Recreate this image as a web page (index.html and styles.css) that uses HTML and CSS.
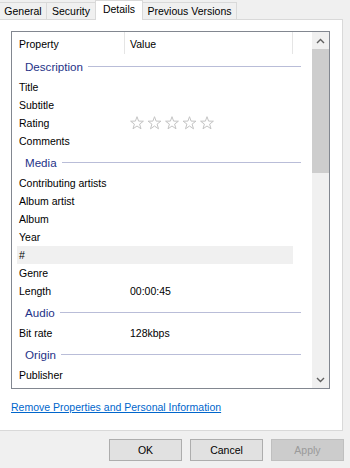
FILE: index.html
```html
<!DOCTYPE html>
<html lang="en">
  <head>
    <meta charset="utf-8">
    <title>Properties - Details</title>
    <link rel="stylesheet" href="styles.css">
  </head>
  <body>
    <div class="tabs">
      <div class="tab tab-general">General</div>
      <div class="tab tab-security">Security</div>
      <div class="tab tab-details active">Details</div>
      <div class="tab tab-previous">Previous Versions</div>
    </div>

    <div class="panel">
      <div class="list">
        <div class="list-body">
          <div class="list-head">
            <div class="head-col col-name">Property</div>
            <div class="head-col col-value">Value</div>
          </div>

          <div class="group"><span class="group-label">Description</span><span class="group-line"></span></div>
          <div class="row"><span class="name">Title</span><span class="value"></span></div>
          <div class="row"><span class="name">Subtitle</span><span class="value"></span></div>
          <div class="row">
            <span class="name">Rating</span>
            <span class="value stars">
              <svg width="90" height="14" viewBox="0 0 90 14">
                <g fill="none" stroke="#c4c4c4" stroke-width="1" stroke-linejoin="round">
                  <polygon id="star" points="7,0.7 8.6,5.1 13.4,5.2 9.6,8.1 11,12.8 7,10 3,12.8 4.4,8.1 0.6,5.2 5.4,5.1"/>
                  <use href="#star" x="17.5"/>
                  <use href="#star" x="35"/>
                  <use href="#star" x="52.5"/>
                  <use href="#star" x="70"/>
                </g>
              </svg>
            </span>
          </div>
          <div class="row"><span class="name">Comments</span><span class="value"></span></div>

          <div class="group"><span class="group-label">Media</span><span class="group-line"></span></div>
          <div class="row"><span class="name">Contributing artists</span><span class="value"></span></div>
          <div class="row"><span class="name">Album artist</span><span class="value"></span></div>
          <div class="row"><span class="name">Album</span><span class="value"></span></div>
          <div class="row"><span class="name">Year</span><span class="value"></span></div>
          <div class="row hover"><span class="name">#</span><span class="value"></span></div>
          <div class="row"><span class="name">Genre</span><span class="value"></span></div>
          <div class="row"><span class="name">Length</span><span class="value">00:00:45</span></div>

          <div class="group"><span class="group-label">Audio</span><span class="group-line"></span></div>
          <div class="row"><span class="name">Bit rate</span><span class="value">128kbps</span></div>

          <div class="group"><span class="group-label">Origin</span><span class="group-line"></span></div>
          <div class="row"><span class="name">Publisher</span><span class="value"></span></div>
        </div>

        <div class="scrollbar">
          <div class="sb-btn">
            <svg width="9" height="6" viewBox="0 0 9 6"><polyline points="1,5 4.5,1.5 8,5" fill="none" stroke="#606060" stroke-width="1.4"/></svg>
          </div>
          <div class="sb-thumb"></div>
          <div class="sb-track"></div>
          <div class="sb-btn">
            <svg width="9" height="6" viewBox="0 0 9 6"><polyline points="1,1 4.5,4.5 8,1" fill="none" stroke="#606060" stroke-width="1.4"/></svg>
          </div>
        </div>
      </div>

      <a class="remove-link" href="#">Remove Properties and Personal Information</a>
    </div>

    <div class="buttons">
      <button class="btn">OK</button>
      <button class="btn">Cancel</button>
      <button class="btn disabled">Apply</button>
    </div>
  </body>
</html>
```

FILE: styles.css
```css
/* dialog base */

body {
  margin: 0;
  background-color: #f0f0f0;
  font-family: "Liberation Sans", Arial, sans-serif;
  font-size: 10.5px;
  color: #000;
  overflow: hidden;
}

/* tabs */

.tabs {
  display: flex;
  align-items: flex-end;
  height: 19px;
  margin-left: -1px;
}

.tab {
  box-sizing: border-box;
  height: 17px;
  line-height: 16px;
  text-align: center;
  background-color: #f0f0f0;
  border: 1px solid #d9d9d9;
  border-bottom: none;
  margin-left: -1px;
}

.tab-general { width: 48px; margin-left: 0; }
.tab-security { width: 50px; }
.tab-details { width: 48px; }
.tab-previous { width: 95px; }

.tab.active {
  position: relative;
  z-index: 1;
  height: 20px;
  line-height: 16px;
  margin-bottom: -1px;
  background-color: #fff;
}

/* page panel */

.panel {
  width: 344px;
  box-sizing: border-box;
  margin-left: -1px;
  padding: 11px 12px 16px 11px;
  background-color: #fff;
  border: 1px solid #d9d9d9;
}

.list {
  display: flex;
  height: 358px;
  box-sizing: border-box;
  border: 1px solid #828790;
}

.list-body {
  flex: 1;
  overflow: hidden;
}

.list-head {
  display: flex;
  height: 22px;
}

.head-col {
  box-sizing: border-box;
  line-height: 24px;
  border-right: 1px solid #e5e5e5;
}

.col-name {
  width: 113px;
  padding-left: 7px;
}

.col-value {
  width: 168px;
  padding-left: 5px;
}

.group {
  display: flex;
  align-items: center;
  height: 24px;
  padding: 0 11px 0 13px;
}

.group-label {
  font-size: 11.6px;
  color: #1e3287;
}

.group-line {
  flex: 1;
  height: 1px;
  margin-left: 5px;
  background-color: #b9bdd8;
}

.row {
  display: flex;
  height: 18px;
  line-height: 18px;
  width: 276px;
  margin-left: 5px;
}

.row.hover {
  background-color: #f0f0f0;
}

.name {
  width: 113px;
  box-sizing: border-box;
  padding-left: 2px;
  white-space: nowrap;
}

.stars {
  display: flex;
  align-items: center;
}

/* scrollbar */

.scrollbar {
  display: flex;
  flex-direction: column;
  width: 17px;
  background-color: #f0f0f0;
}

.sb-btn {
  height: 17px;
  display: flex;
  align-items: center;
  justify-content: center;
}

.sb-thumb {
  height: 124px;
  background-color: #cdcdcd;
}

.sb-track {
  flex: 1;
}

/* link + buttons */

.remove-link {
  display: block;
  margin-top: 11px;
  line-height: 14px;
  color: #0066cc;
  text-decoration: underline;
}

.buttons {
  display: flex;
  justify-content: flex-end;
  gap: 8px;
  padding: 8px 6px 0 0;
}

.btn {
  width: 73px;
  height: 22px;
  font-family: "Liberation Sans", Arial, sans-serif;
  font-size: 10.5px;
  background-color: #e1e1e1;
  border: 1px solid #adadad;
  color: #000;
  padding: 0;
}

.btn.disabled {
  background-color: #cccccc;
  border-color: #bfbfbf;
  color: #9a9a9a;
}
```
